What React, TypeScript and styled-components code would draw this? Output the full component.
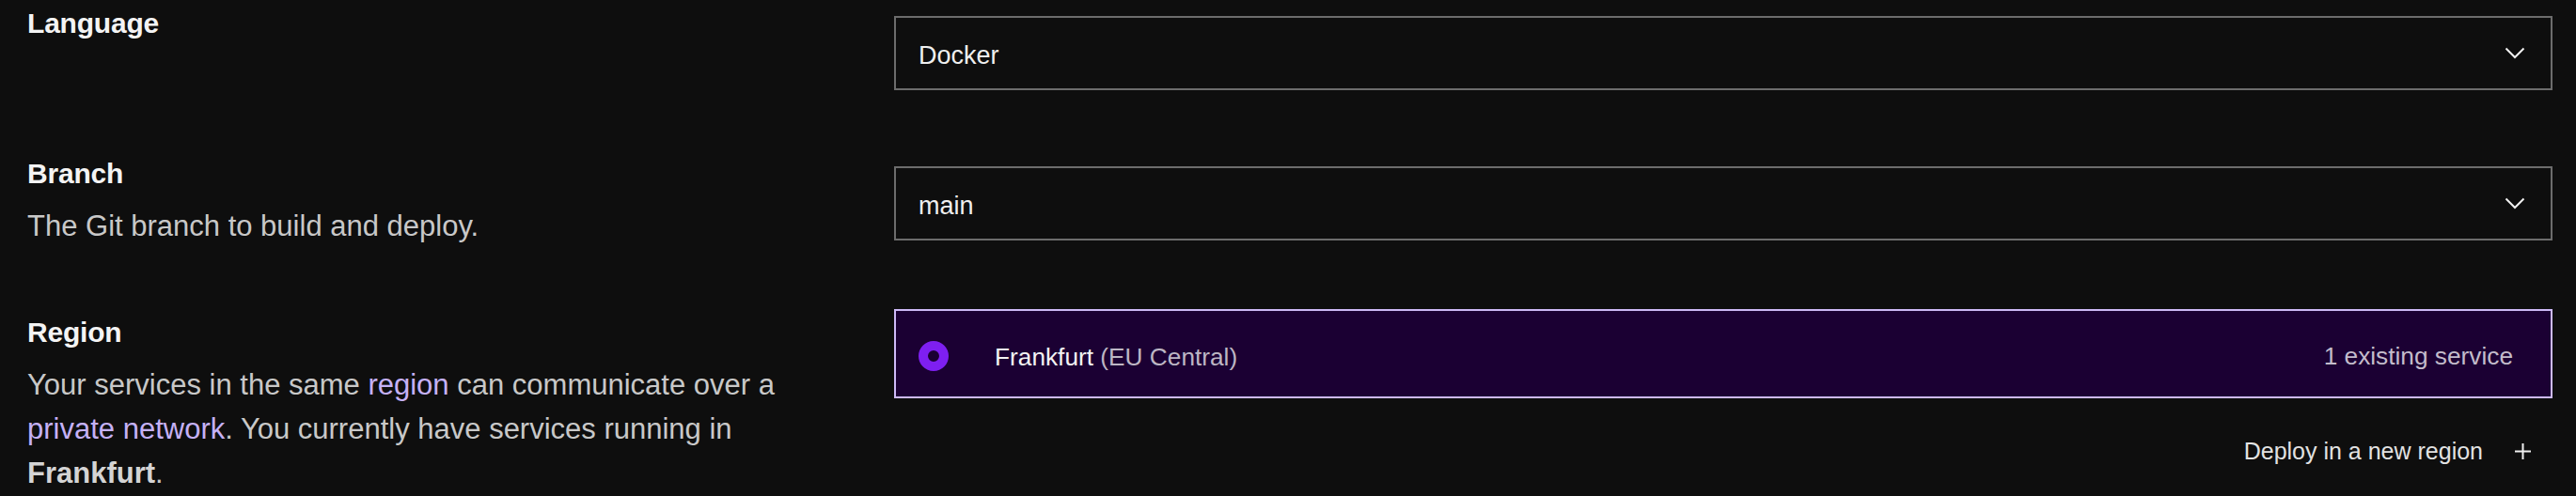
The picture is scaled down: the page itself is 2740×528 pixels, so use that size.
import React from "react";
import styled, { createGlobalStyle } from "styled-components";

const GlobalStyle = createGlobalStyle`
  html, body {
    margin: 0;
    padding: 0;
    background: #0e0e0e;
  }
  body {
    font-family: "Liberation Sans", Arial, sans-serif;
    color: #f2f2f2;
    overflow: hidden;
  }
  * { box-sizing: border-box; }
`;

const Page = styled.div`
  width: 2740px;
  height: 528px;
  overflow: hidden;
  background: #0e0e0e;
`;

const Form = styled.div`
  display: flex;
  flex-direction: column;
  gap: 61px;
  padding: 0 25px 0 29px;
  margin-top: -3px;
`;

const Row = styled.section`
  display: grid;
  grid-template-columns: 1fr 2fr;
  column-gap: 40px;
  align-items: start;
`;

const Info = styled.div`
  display: flex;
  flex-direction: column;
  gap: 9px;
  padding-top: 4.3px;
`;

const Heading = styled.h3`
  margin: 0;
  font-size: 30px;
  line-height: 47px;
  font-weight: 700;
  color: #f4f4f4;
  letter-spacing: -0.2px;
`;

const Description = styled.p`
  margin: 0;
  font-size: 31px;
  line-height: 47.25px;
  color: #c8c8c8;
`;

const Link = styled.a`
  color: #c5b1f6;
  text-decoration: none;
`;

const Strong = styled.strong`
  font-weight: 700;
  color: #d4d4d4;
`;

const Select = styled.button`
  margin-top: 19.9px;
  width: 100%;
  height: 79px;
  display: flex;
  align-items: center;
  justify-content: space-between;
  padding: 0 27px 0 24px;
  background: #0e0e0e;
  border: 2px solid #6c6c6c;
  border-radius: 0;
  color: #efefef;
  font-family: "Liberation Sans", Arial, sans-serif;
  font-size: 27px;
  text-align: left;
  cursor: pointer;
`;

const SelectValue = styled.span`
  padding-top: 7px;
`;

const RegionColumn = styled.div`
  display: flex;
  flex-direction: column;
  align-items: stretch;
  padding-top: 3.7px;
`;

const RegionOption = styled.label`
  height: 95px;
  display: flex;
  align-items: center;
  padding: 4px 40px 0 24px;
  background: #1b0033;
  border: 2px solid #cdb9f7;
  font-size: 26.25px;
  cursor: pointer;
`;

const Radio = styled.span`
  width: 32px;
  height: 32px;
  flex: none;
  border-radius: 50%;
  border: 10.5px solid #7e1ff1;
  background: #1b0033;
`;

const RegionName = styled.span`
  margin-left: 49px;
  padding-top: 3px;
  color: #f3f3f3;
  flex: 1;
`;

const RegionArea = styled.span`
  color: #bdb6c4;
`;

const ServiceCount = styled.span`
  padding-top: 1px;
  color: #c3bccb;
`;

const AddButton = styled.button`
  align-self: flex-end;
  margin-top: 28px;
  height: 56px;
  display: flex;
  align-items: center;
  gap: 34px;
  padding: 0 23px 0 0;
  background: transparent;
  border: none;
  color: #e2e2e2;
  font-family: "Liberation Sans", Arial, sans-serif;
  font-size: 25px;
  cursor: pointer;
`;

const Chevron = () => (
  <svg width="22" height="13" viewBox="0 0 22 13" fill="none">
    <path d="M1.5 1.5 L11 11 L20.5 1.5" stroke="#f0f0f0" strokeWidth="2" />
  </svg>
);

const Plus = () => (
  <svg width="17" height="17" viewBox="0 0 17 17" fill="none">
    <path d="M8.5 0 V17 M0 8.5 H17" stroke="#f0f0f0" strokeWidth="2" />
  </svg>
);

export default function App() {
  return (
    <Page>
      <GlobalStyle />
      <Form>
        <Row>
          <Info>
            <Heading>Language</Heading>
          </Info>
          <Select>
            <SelectValue>Docker</SelectValue>
            <Chevron />
          </Select>
        </Row>
        <Row>
          <Info>
            <Heading>Branch</Heading>
            <Description>The Git branch to build and deploy.</Description>
          </Info>
          <Select>
            <SelectValue>main</SelectValue>
            <Chevron />
          </Select>
        </Row>
        <Row>
          <Info>
            <Heading>Region</Heading>
            <Description>
              Your services in the same <Link href="#">region</Link> can
              communicate over a <Link href="#">private network</Link>. You
              currently have services running in <Strong>Frankfurt</Strong>.
            </Description>
          </Info>
          <RegionColumn>
            <RegionOption>
              <Radio />
              <RegionName>
                Frankfurt <RegionArea>(EU Central)</RegionArea>
              </RegionName>
              <ServiceCount>1 existing service</ServiceCount>
            </RegionOption>
            <AddButton>
              <span>Deploy in a new region</span>
              <Plus />
            </AddButton>
          </RegionColumn>
        </Row>
      </Form>
    </Page>
  );
}
